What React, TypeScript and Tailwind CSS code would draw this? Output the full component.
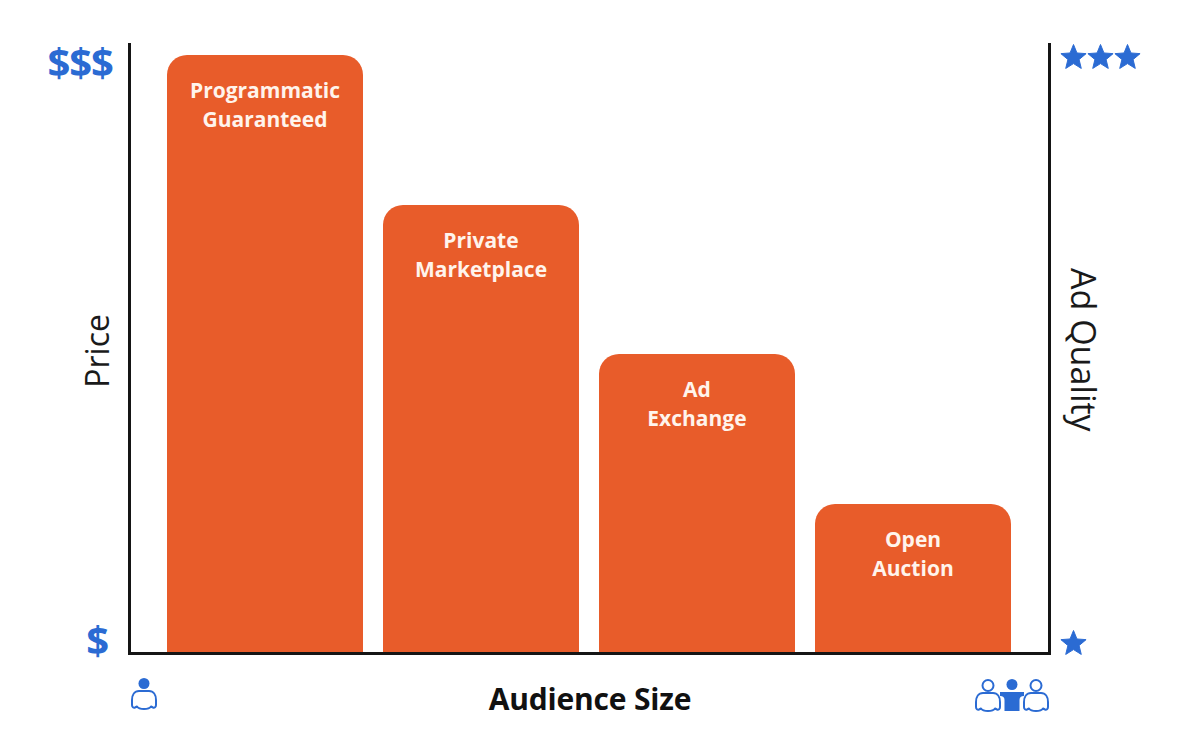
import React from 'react';

const BLUE = '#2B6BD3';

const bars = [
  { label: ['Programmatic', 'Guaranteed'], height: 'h-[597px]' },
  { label: ['Private', 'Marketplace'], height: 'h-[447px]' },
  { label: ['Ad', 'Exchange'], height: 'h-[298px]' },
  { label: ['Open', 'Auction'], height: 'h-[148px]' },
];

function Star() {
  return (
    <svg width="27" height="25" viewBox="-13.5 -14 27 25.5">
      <polygon
        points="0,-13.5 3.53,-4.85 12.84,-4.17 5.71,1.85 7.94,10.92 0,6 -7.94,10.92 -5.71,1.85 -12.84,-4.17 -3.53,-4.85"
        fill={BLUE}
        stroke={BLUE}
        strokeWidth="1"
        strokeLinejoin="round"
      />
    </svg>
  );
}

// outline torso used by both person icons
const torso =
  'M9 14H19C23.5 14 26 18 26 23V28C26 30 24.5 31 23 30.5L21 29.5C20 31 18 32 14 32C10 32 8 31 7 29.5L5 30.5C3.5 31 2 30 2 28V23C2 18 4.5 14 9 14Z';

function Person() {
  return (
    <svg width="28" height="34" viewBox="0 0 28 34">
      <circle cx="14" cy="6.5" r="5.5" fill={BLUE} />
      <path d={torso} fill="none" stroke={BLUE} strokeWidth="2" strokeLinejoin="round" />
    </svg>
  );
}

function People() {
  return (
    <svg width="76" height="36" viewBox="0 0 76 36">
      <path d="M26 15H50V19C47 19 45.5 20.5 45.5 23V34H30.5V23C30.5 20.5 29 19 26 19Z" fill={BLUE} />
      <circle cx="38" cy="7.5" r="5.5" fill={BLUE} />
      <g transform="translate(0 2)">
        <circle cx="14" cy="6.5" r="5.5" fill="white" stroke={BLUE} strokeWidth="2" />
        <path d={torso} fill="white" stroke={BLUE} strokeWidth="2" strokeLinejoin="round" />
      </g>
      <g transform="translate(48 2)">
        <circle cx="14" cy="6.5" r="5.5" fill="white" stroke={BLUE} strokeWidth="2" />
        <path d={torso} fill="white" stroke={BLUE} strokeWidth="2" strokeLinejoin="round" />
      </g>
    </svg>
  );
}

export default function App() {
  return (
    <div className="w-[1198px] h-[742px] bg-white pt-[41px] font-['Open_Sans',sans-serif] overflow-hidden">
      {/* Chart row */}
      <div className="flex h-[614px]">
        {/* Price axis labels */}
        <div className="w-[128px] flex flex-col items-end">
          <div className="mr-[15px] text-[40px] font-bold leading-[42px] tracking-[-1px] text-[#2B6BD3]">
            $$$
          </div>
          <div className="flex-1 flex items-center mr-[11px]">
            <span className="[writing-mode:vertical-rl] rotate-180 text-[32px] font-normal leading-[40px] text-[#1a1a1a]">
              Price
            </span>
          </div>
          <div className="mr-[19px] mb-[-6px] text-[40px] font-bold leading-[42px] text-[#2B6BD3]">$</div>
        </div>

        {/* Plot area */}
        <div className="w-[923px] mt-[2px] border-l-[3px] border-r-[3px] border-b-[3px] border-[#151515] flex items-end gap-[20px] pl-[36px]">
          {bars.map((bar) => (
            <div
              key={bar.label[0]}
              className={`w-[196px] ${bar.height} rounded-t-[20px] bg-[#E85C2A] pt-[21px] text-center text-[21px] font-bold leading-[29px] text-[#FFF4EC]`}
            >
              {bar.label.map((line) => (
                <div key={line}>{line}</div>
              ))}
            </div>
          ))}
        </div>

        {/* Quality axis labels */}
        <div className="flex-1 flex flex-col items-start pl-[9px]">
          <div className="flex mt-[3px]">
            <Star />
            <Star />
            <Star />
          </div>
          <div className="flex-1 flex items-center ml-[4px]">
            <span className="[writing-mode:vertical-rl] text-[34px] font-normal leading-[40px] text-[#1a1a1a]">
              Ad Quality
            </span>
          </div>
          <div className="mb-[0px]">
            <Star />
          </div>
        </div>
      </div>

      {/* Audience row */}
      <div className="flex pl-[128px] mt-[22px]">
        <div className="w-[923px] grid grid-cols-[1fr_auto_1fr] items-start pl-[2px] pr-[1px]">
          <div className="flex justify-start">
            <Person />
          </div>
          <div className="mt-[4px] text-[30px] font-bold leading-[36px] text-[#111] tracking-[-0.2px]">
            Audience Size
          </div>
          <div className="flex justify-end">
            <People />
          </div>
        </div>
      </div>
    </div>
  );
}
